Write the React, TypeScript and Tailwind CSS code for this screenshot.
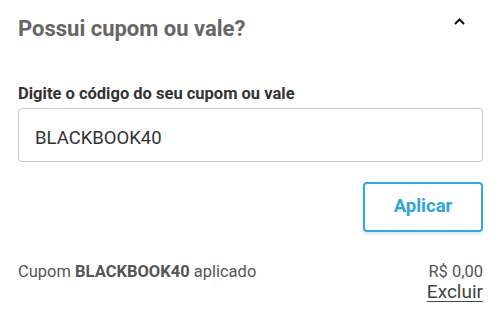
const App = () => {
  return (
    <div className="min-h-screen bg-white pl-[18px] pr-[17px] pt-[15px] font-['Roboto',sans-serif]">
      {/* Header */}
      <div className="flex items-start justify-between">
        <h2 className="text-[22px] leading-[28px] font-bold text-[#666666]">
          Possui cupom ou vale?
        </h2>
        <svg
          className="mt-[3px] mr-[18px]"
          width="11"
          height="7"
          viewBox="0 0 11 7"
          fill="none"
        >
          <path d="M1 6 L5.5 1.5 L10 6" stroke="#111" strokeWidth="2" />
        </svg>
      </div>

      {/* Code field */}
      <label className="mt-[41px] block text-[16.5px] leading-[20px] font-bold text-[#333333]">
        Digite o código do seu cupom ou vale
      </label>
      <input
        className="mt-[4px] block h-[54px] w-full rounded-[4px] border border-[#c9c9c9] pl-[16px] pt-[6px] text-[18.5px] text-[#333333] outline-none"
        type="text"
        value="BLACKBOOK40"
        readOnly
      />

      {/* Apply button */}
      <div className="mt-[20px] flex justify-end">
        <button
          type="button"
          className="h-[50px] w-[120px] rounded-[4px] border-2 border-[#2eaadc] bg-white text-[18.5px] font-bold text-[#2ea6d8] shadow-[0_2px_4px_rgba(0,0,0,0.12)]"
        >
          Aplicar
        </button>
      </div>

      {/* Applied coupon */}
      <div className="mt-[30px] flex items-start justify-between">
        <p className="text-[16.5px] leading-[20px] text-[#555555]">
          Cupom <span className="font-bold">BLACKBOOK40</span> aplicado
        </p>
        <div className="flex flex-col items-end pt-[1px]">
          <span className="text-[16.5px] leading-[18px] text-[#555555]">R$ 0,00</span>
          <a className="text-[19px] leading-[21px] text-[#444444] underline underline-offset-[3px]" href="#">
            Excluir
          </a>
        </div>
      </div>
    </div>
  );
};

export default App;
